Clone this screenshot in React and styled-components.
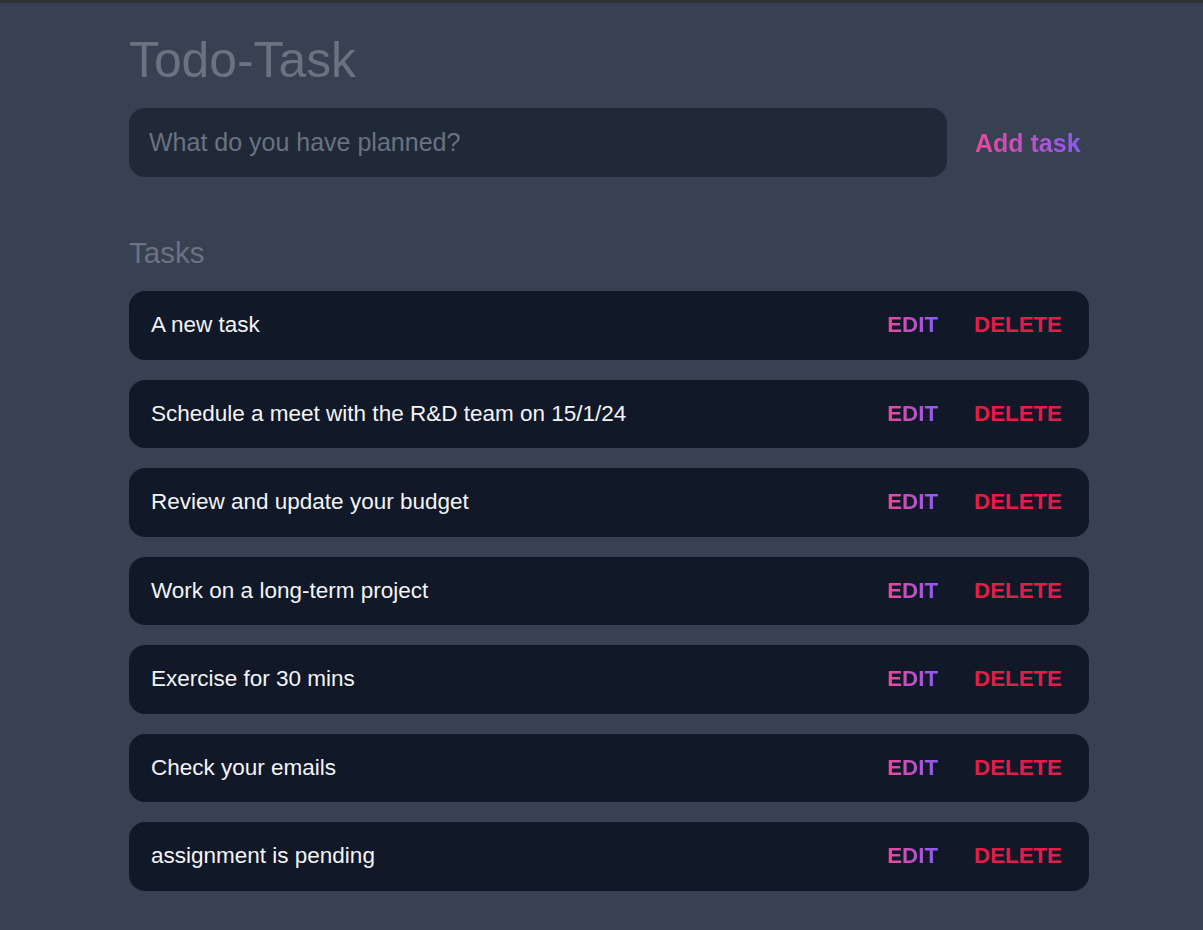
import React from "react";
import styled, { createGlobalStyle } from "styled-components";

const Global = createGlobalStyle`
  html, body { margin: 0; padding: 0; background: #374151; }
  body {
    font-family: "Liberation Sans", Arial, sans-serif;
    border-top: 3px solid #333333;
    min-height: 927px;
  }
`;

const Page = styled.main`
  width: 960px;
  margin-left: 129px;
  padding-top: 27px;
  padding-bottom: 40px;
`;

const Title = styled.h1`
  margin: 0;
  font-size: 49.8px;
  font-weight: 400;
  line-height: 60px;
  color: #6b7280;
`;

const Form = styled.form`
  display: flex;
  align-items: center;
  gap: 28px;
  margin-top: 18px;
`;

const Input = styled.input`
  flex: 0 0 818px;
  height: 69px;
  box-sizing: border-box;
  border: none;
  outline: none;
  border-radius: 16px;
  background: #1f2937;
  padding: 0 20px;
  font-family: inherit;
  font-size: 25px;
  color: #e5e7eb;
  &::placeholder { color: #6b7280; }
`;

const GradientText = styled.span`
  background: linear-gradient(90deg, #ec4899, #8b5cf6);
  -webkit-background-clip: text;
  background-clip: text;
  color: transparent;
  font-weight: 700;
`;

const AddButton = styled.button`
  border: none;
  background: none;
  padding: 0;
  cursor: pointer;
  font-family: inherit;
  font-size: 25px;
  line-height: 30px;
`;

const SectionTitle = styled.h2`
  margin: 58px 0 0;
  font-size: 29.5px;
  font-weight: 400;
  line-height: 36px;
  color: #6b7280;
`;

const List = styled.ul`
  list-style: none;
  margin: 20px 0 0;
  padding: 0;
  display: flex;
  flex-direction: column;
  gap: 20px;
`;

const Row = styled.li`
  display: flex;
  align-items: center;
  height: 68.5px;
  box-sizing: border-box;
  padding: 0 27px 0 22px;
  border-radius: 16px;
  background: #111827;
`;

const TaskText = styled.span`
  flex: 1;
  font-size: 22.5px;
  color: #f3f4f6;
`;

const Actions = styled.div`
  display: flex;
  align-items: center;
  gap: 36px;
`;

const ActionButton = styled.button`
  border: none;
  background: none;
  padding: 0;
  cursor: pointer;
  font-family: inherit;
  font-size: 22.3px;
  font-weight: 700;
  color: ${(p) => (p.$danger ? "#e11d48" : "inherit")};
`;

const tasks = [
  "A new task",
  "Schedule a meet with the R&D team on 15/1/24",
  "Review and update your budget",
  "Work on a long-term project",
  "Exercise for 30 mins",
  "Check your emails",
  "assignment is pending",
];

export default function App() {
  return (
    <>
      <Global />
      <Page>
        <Title>Todo-Task</Title>
        <Form onSubmit={(e) => e.preventDefault()}>
          <Input placeholder="What do you have planned?" />
          <AddButton type="submit">
            <GradientText>Add task</GradientText>
          </AddButton>
        </Form>
        <SectionTitle>Tasks</SectionTitle>
        <List>
          {tasks.map((t) => (
            <Row key={t}>
              <TaskText>{t}</TaskText>
              <Actions>
                <ActionButton>
                  <GradientText>EDIT</GradientText>
                </ActionButton>
                <ActionButton $danger>DELETE</ActionButton>
              </Actions>
            </Row>
          ))}
        </List>
      </Page>
    </>
  );
}
